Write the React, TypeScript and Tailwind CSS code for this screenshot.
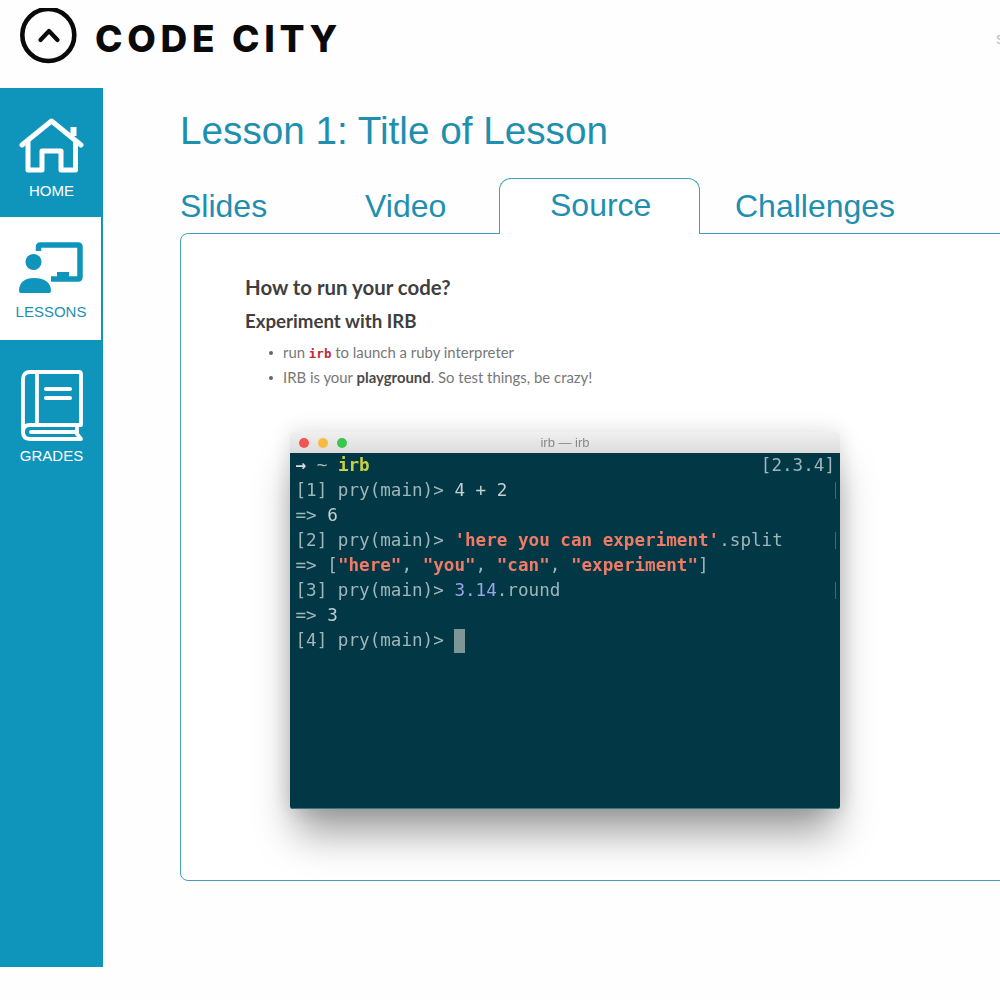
const blue = 'bg-[#0f95bb]';

function Logo() {
  return (
    <svg width="60" height="60" viewBox="0 0 60 60" fill="none" stroke="#0a0a0a" className="shrink-0">
      <circle cx="28.3" cy="27" r="26" strokeWidth="4.6" />
      <path d="M20.5 32 L29 23 L37.5 32" strokeWidth="4.2" strokeLinecap="round" strokeLinejoin="round" />
    </svg>
  );
}

function HomeIcon() {
  return (
    <svg width="66" height="56" viewBox="0 0 66 56" fill="none" stroke="#fff" strokeWidth="5" strokeLinejoin="round" strokeLinecap="round">
      <path d="M3 27 L32.5 3 L62 27" />
      <path d="M54.5 18 V9" strokeWidth="6" strokeLinecap="butt" />
      <path d="M9 24 V52 H23 V33 H42 V52 H56.5 V24" />
    </svg>
  );
}

function LessonsIcon() {
  return (
    <svg width="64" height="52" viewBox="0 0 64 52" fill="none">
      <path d="M19.5 9 V5 Q19.5 3 21.5 3 H59 Q61 3 61 5 V35 Q61 37 59 37 H32" stroke="#0f95bb" strokeWidth="5.5" />
      <rect x="38" y="30" width="12" height="8" fill="#0f95bb" />
      <circle cx="14.5" cy="20" r="8" fill="#0f95bb" />
      <path d="M0 49 C0 40 6 36 15 36 C25 36 32 40 32 49 Q32 51 30 51 H2 Q0 51 0 49 Z" fill="#0f95bb" />
    </svg>
  );
}

function GradesIcon() {
  return (
    <svg width="62" height="72" viewBox="0 0 62 72" fill="none" stroke="#fff" strokeLinecap="round" strokeLinejoin="round">
      <path d="M9 2 H58 Q60 2 60 4 V55 H9 Q2 55 2 62 V9 Q2 2 9 2 Z" strokeWidth="3.8" />
      <path d="M16 3 V54" strokeWidth="3.8" />
      <path d="M2 62 Q2 69 9 69 H60 L56 64 V55" strokeWidth="3.8" />
      <path d="M10 62 H54" strokeWidth="3.8" />
      <path d="M25 19 H49 M25 28 H49" strokeWidth="4" />
    </svg>
  );
}

function Sidebar() {
  return (
    <aside className={`w-[103px] h-[879px] shrink-0 ${blue} flex flex-col`}>
      <div className="h-[128px] flex flex-col items-center pt-[30px] text-white">
        <HomeIcon />
        <span className="text-[15px] leading-[18px] mt-[8px]">HOME</span>
      </div>
      <div className="h-[123px] mt-px mr-[2px] bg-white flex flex-col items-center pt-[25px] text-[#1f8fb0]">
        <LessonsIcon />
        <span className="text-[15px] leading-[18px] mt-[9px] ml-[1px]">LESSONS</span>
      </div>
      <div className="flex flex-col items-center pt-[30px] text-white">
        <GradesIcon />
        <span className="text-[15px] leading-[18px] mt-[5px]">GRADES</span>
      </div>
    </aside>
  );
}

function Mark() {
  return <span className="w-px h-[17px] mr-[-1px] bg-[#3d6a76]" />;
}

function Terminal() {
  const str = 'text-[#ef7b67] font-bold';
  return (
    <div className="w-[550px] h-[377px] ml-[45px] mt-[42px] rounded-[3px] overflow-hidden shadow-[0_30px_38px_-6px_rgba(0,0,0,0.38),0_0_22px_rgba(0,0,0,0.14)] blur-[0.4px]">
      <div className="h-[21px] flex items-center bg-gradient-to-b from-[#f0f0f0] to-[#dcdcdc] px-[9px]">
        <div className="flex gap-[9px] w-[48px]">
          <span className="w-[10px] h-[10px] rounded-full bg-[#f0564f]" />
          <span className="w-[10px] h-[10px] rounded-full bg-[#f8bb3f]" />
          <span className="w-[10px] h-[10px] rounded-full bg-[#38c74a]" />
        </div>
        <span className="flex-1 text-center text-[13px] text-[#8a8a8a] font-['Liberation_Sans',sans-serif]">irb — irb</span>
        <div className="w-[48px]" />
      </div>
      <div className="h-[356px] bg-[#023845] border-b border-[#3f7480] pl-[5.5px] pr-[5px] font-['DejaVu_Sans_Mono',monospace] text-[17.6px] leading-[25px] text-[#9fb6b9] whitespace-pre">
        <div className="flex justify-between">
          <span>
            <span className="text-[#d5dfdf] font-bold">→</span> ~ <span className="text-[#c4cf45] font-bold">irb</span>
          </span>
          <span>[2.3.4]</span>
        </div>
        <div className="flex justify-between items-center">
          <span>[1] pry(main)&gt; <span className="text-[#c2cfd0]">4 + 2</span></span>
          <Mark />
        </div>
        <div>=&gt; <span className="text-[#c2cfd0]">6</span></div>
        <div className="flex justify-between items-center">
          <span>
            [2] pry(main)&gt; <span className={str}>'here you can experiment'</span>.split
          </span>
          <Mark />
        </div>
        <div>
          =&gt; [<span className={str}>"here"</span>, <span className={str}>"you"</span>,{' '}
          <span className={str}>"can"</span>, <span className={str}>"experiment"</span>]
        </div>
        <div className="flex justify-between items-center">
          <span>
            [3] pry(main)&gt; <span className="text-[#9aa5e8]">3.14</span>.round
          </span>
          <Mark />
        </div>
        <div>=&gt; <span className="text-[#c2cfd0]">3</span></div>
        <div className="flex items-center">
          <span>[4] pry(main)&gt; </span>
          <span className="w-[11px] h-[24px] bg-[#7f9699]" />
        </div>
      </div>
    </div>
  );
}

function SourcePanel() {
  return (
    <div className="w-[840px] h-[648px] border border-[#3f9fbd] rounded-tl-[8px] rounded-bl-[8px] bg-white pl-[64px] pt-[39px]">
      <h1 className="font-['Lato',sans-serif] font-bold text-[20.4px] leading-[28px] text-[#3f3f3f]">How to run your code?</h1>
      <h2 className="font-['Lato',sans-serif] font-bold text-[18.7px] leading-[24px] mt-[8px] text-[#3f3f3f]">Experiment with IRB</h2>
      <ul className="mt-[7px] ml-[24px] font-['Lato',sans-serif] text-[14.9px] text-[#777]">
        <li className="h-[25px] flex items-center gap-[10px]">
          <span className="w-[4px] h-[4px] rounded-full bg-[#666]" />
          <span>
            run <code className="font-['DejaVu_Sans_Mono',monospace] text-[12.5px] font-bold text-[#c0283c]">irb</code> to launch a ruby interpreter
          </span>
        </li>
        <li className="h-[25px] flex items-center gap-[10px]">
          <span className="w-[4px] h-[4px] rounded-full bg-[#666]" />
          <span>
            IRB is your <b className="text-[#4a4a4a]">playground</b>. So test things, be crazy!
          </span>
        </li>
      </ul>
      <Terminal />
    </div>
  );
}

function Tabs() {
  return (
    <div className="flex items-end h-[56px] -mb-px text-[32px] leading-[38px] text-[#1f8fb0]">
      <div className="w-[185px] pb-[9px]">Slides</div>
      <div className="w-[134px] pb-[9px]">Video</div>
      <div className="w-[201px] h-[56px] border border-b-0 border-[#3f9fbd] rounded-t-[12px] bg-white pl-[50px] pt-[7px] relative z-10">Source</div>
      <div className="pl-[35px] pb-[9px]">Challenges</div>
    </div>
  );
}

export default function App() {
  return (
    <div className="w-[1000px] h-[1000px] overflow-hidden bg-[#fefefe] font-['Liberation_Sans',sans-serif]">
      <header className="h-[88px] flex pl-[20px] pt-[8px] relative">
        <Logo />
        <span className="ml-[15px] mt-[8px] font-['Inter',sans-serif] font-extrabold text-[37px] leading-[46px] tracking-[4.7px] text-[#0a0a0a]">CODE CITY</span>
        <span className="absolute left-[996px] top-[30px] text-[13px] text-[#b5b5b5]">S</span>
      </header>
      <div className="flex">
        <Sidebar />
        <main className="pl-[77px] flex-1 overflow-hidden">
          <div className="text-[38.7px] leading-[46px] text-[#1f8fb0] pt-[20px]">Lesson 1: Title of Lesson</div>
          <div className="mt-[24px]">
            <Tabs />
            <SourcePanel />
          </div>
        </main>
      </div>
    </div>
  );
}
